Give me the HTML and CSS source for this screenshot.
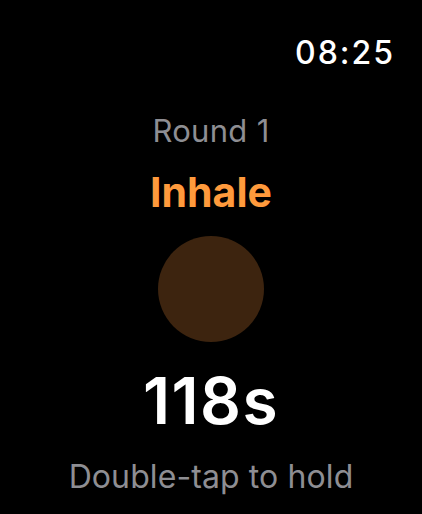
FILE: index.html
```html
<!DOCTYPE html>
<html>
<head>
<meta charset="utf-8">
<link rel="stylesheet" href="styles.css">
</head>
<body>
<div class="screen">
  <div class="status"><span class="time">08:25</span></div>
  <div class="content">
    <div class="round">Round 1</div>
    <div class="phase">Inhale</div>
    <div class="circle"></div>
    <div class="count">118s</div>
    <div class="hint">Double-tap to hold</div>
  </div>
</div>
</body>
</html>
```
FILE: styles.css
```css
html, body {
  margin: 0;
  padding: 0;
  background: #000;
}
.screen {
  width: 422px;
  height: 514px;
  background: #000;
  font-family: Inter, "Noto Sans", sans-serif;
  display: flex;
  flex-direction: column;
  overflow: hidden;
}
.status {
  display: flex;
  justify-content: flex-end;
  padding: 33px 27px 0 0;
  height: 40px;
}
.time {
  color: #fff;
  font-size: 32px;
  font-weight: 500;
  line-height: 40px;
  letter-spacing: 2px;
}
.content {
  display: flex;
  flex-direction: column;
  align-items: center;
  padding-top: 40px;
}
.round {
  color: #8e8e93;
  font-size: 31px;
  line-height: 36px;
  letter-spacing: 0.3px;
}
.phase {
  color: #ff9a3c;
  font-size: 41px;
  font-weight: 700;
  line-height: 50px;
  margin-top: 18px;
}
.circle {
  width: 106px;
  height: 106px;
  border-radius: 50%;
  background: #3d240f;
  margin-top: 19px;
}
.count {
  color: #fff;
  font-size: 64px;
  font-weight: 600;
  line-height: 72px;
  margin-top: 23px;
  letter-spacing: 1.5px;
}
.hint {
  color: #8e8e93;
  font-size: 32px;
  line-height: 40px;
  margin-top: 20px;
  letter-spacing: 0.1px;
}
```
